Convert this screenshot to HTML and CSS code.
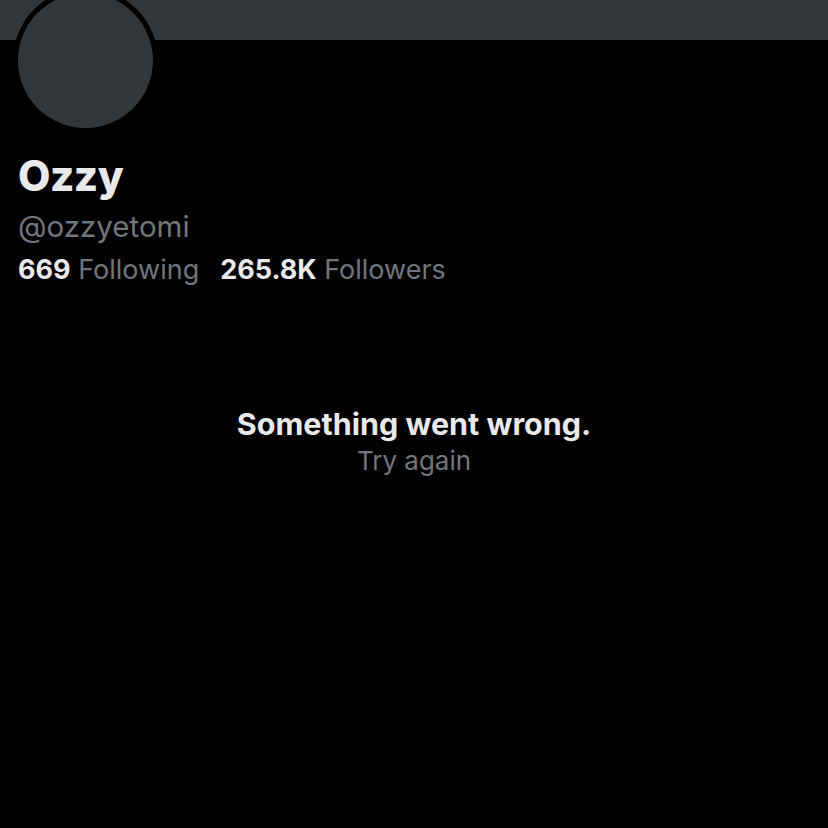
FILE: index.html
```html
<!DOCTYPE html>
<html>
<head>
<meta charset="utf-8">
<link rel="stylesheet" href="styles.css">
</head>
<body>
<div class="page">
  <div class="banner"></div>
  <div class="profile">
    <div class="avatar-wrap"><div class="avatar"></div></div>
    <div class="name">Ozzy</div>
    <div class="handle">@ozzyetomi</div>
    <div class="stats">
      <span class="stat"><b>669</b> Following</span>
      <span class="stat"><b>265.8K</b> Followers</span>
    </div>
  </div>
  <div class="error">
    <div class="error-title">Something went wrong.</div>
    <div class="error-retry">Try again</div>
  </div>
</div>
</body>
</html>
```
FILE: styles.css
```css
html, body {
  margin: 0;
  padding: 0;
  background: #000;
}
.page {
  width: 828px;
  height: 828px;
  background: #000;
  font-family: Inter, "Open Sans", sans-serif;
  color: #e7e9ea;
  overflow: hidden;
}
.banner {
  height: 40px;
  background: #333639;
}
.profile {
  position: relative;
  padding: 0 18px;
}
.avatar-wrap {
  position: absolute;
  left: 13px;
  top: -52px;
  width: 145px;
  height: 145px;
  border-radius: 50%;
  background: #000;
  display: flex;
  align-items: center;
  justify-content: center;
}
.avatar {
  width: 135px;
  height: 135px;
  border-radius: 50%;
  background: #333639;
}
.name {
  padding-top: 111px;
  font-size: 42px;
  font-weight: 800;
  line-height: 50px;
  letter-spacing: -0.5px;
}
.handle {
  font-size: 29.5px;
  line-height: 50px;
  color: #71767b;
}
.stats {
  display: flex;
  gap: 21px;
  font-size: 27px;
  line-height: 38px;
  color: #71767b;
}
.stats b {
  color: #e7e9ea;
  font-weight: 700;
}
.error {
  padding-top: 116px;
  display: flex;
  flex-direction: column;
  align-items: center;
}
.error-title {
  font-size: 30.5px;
  font-weight: 700;
  line-height: 38px;
}
.error-retry {
  font-size: 26px;
  line-height: 36px;
  color: #71767b;
}
```
